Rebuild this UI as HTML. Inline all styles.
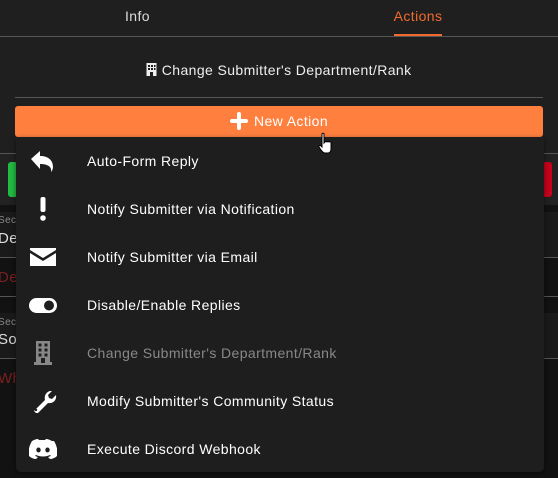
<!DOCTYPE html>
<html><head><meta charset="utf-8"><style>
*{margin:0;padding:0;box-sizing:border-box}
body{width:558px;height:478px;overflow:hidden;background:#121212;font-family:"Liberation Sans",sans-serif;position:relative;color:#fff;letter-spacing:0.4px}
.abs{position:absolute}
.menu{position:absolute;left:16px;top:137px;width:528px;height:335px;background:#1e1e1e;border-radius:0 0 5px 5px;box-shadow:0 2px 6px rgba(0,0,0,.5)}
.it{position:absolute;left:0;height:48px;width:100%;font-size:14px;line-height:48px}
.it span{position:absolute;left:71px}
.it svg{position:absolute;left:13px;top:12px}
</style></head><body>
<div class="abs" style="left:0;top:0;width:558px;height:153px;background:#1f1f1f"></div>
<div class="abs" style="left:0;top:36px;width:558px;height:1px;background:#555"></div>
<div class="abs" style="left:0;top:8px;width:275px;text-align:center;font-size:14px;color:#ddd">Info</div>
<div class="abs" style="left:369px;top:8px;width:98px;text-align:center;font-size:14px;color:#f26a2e">Actions</div>
<div class="abs" style="left:394px;top:34px;width:48px;height:2px;background:#f26a2e"></div>
<div class="abs" style="left:0;top:62px;width:558px;text-align:center;font-size:14px;color:#eee">
<svg width="11" height="13" viewBox="0 0 11 13" style="vertical-align:-1px"><rect x="0.5" y="0" width="10" height="13" fill="#eee"/><g fill="#1f1f1f"><rect x="2" y="2" width="2" height="2"/><rect x="5" y="2" width="2" height="2"/><rect x="8" y="2" width="1.5" height="2"/><rect x="2" y="5" width="2" height="2"/><rect x="5" y="5" width="2" height="2"/><rect x="8" y="5" width="1.5" height="2"/><rect x="4" y="9" width="3" height="4"/></g></svg> Change Submitter's Department/Rank</div>
<div class="abs" style="left:15px;top:97px;width:528px;height:1px;background:#555"></div>
<div class="abs" style="left:15px;top:106px;width:528px;height:31px;background:#ff7f3f;border-radius:3px;text-align:center;font-size:14px;line-height:31px;color:#fff">
<svg width="18" height="18" viewBox="0 0 18 18" style="vertical-align:-4px;margin-right:6px"><path d="M9 2v14M2 9h14" stroke="#fff" stroke-width="4" stroke-linecap="round"/></svg>New Action</div>
<div class="abs" style="left:0;top:153px;width:558px;height:1px;background:#555"></div>
<div class="abs" style="left:0;top:154px;width:558px;height:51px;background:#222"></div>
<div class="abs" style="left:8px;top:162px;width:10px;height:35px;background:#22bb44;border-radius:3px"></div>
<div class="abs" style="left:542px;top:162px;width:10px;height:35px;background:#c8001c;border-radius:3px"></div>
<div class="abs" style="left:0;top:212px;width:558px;height:45px;background:#1a1a1a"></div>
<div class="abs" style="left:-2px;top:215px;font-size:10px;color:#888">Sect</div>
<div class="abs" style="left:-2px;top:230px;font-size:15px;color:#ddd">Dep</div>
<div class="abs" style="left:0;top:257px;width:558px;height:1px;background:#555"></div>
<div class="abs" style="left:-2px;top:269px;font-size:15px;color:#7a2020">Dep</div>
<div class="abs" style="left:0;top:296px;width:558px;height:1px;background:#555"></div>
<div class="abs" style="left:0;top:313px;width:558px;height:45px;background:#1a1a1a"></div>
<div class="abs" style="left:-2px;top:317px;font-size:10px;color:#888">Sect</div>
<div class="abs" style="left:-2px;top:331px;font-size:15px;color:#ddd">Sor</div>
<div class="abs" style="left:0;top:358px;width:558px;height:1px;background:#555"></div>
<div class="abs" style="left:-2px;top:370px;font-size:15px;color:#7a2020">Wh</div>
<div class="menu">
<div class="it" style="top:0"><svg width="28" height="24" viewBox="0 0 28 24"><path d="M2 10L11 2v5c8 0 13 4 13 11c0 2-1 4-2 5c1-5-3-8-11-8v5z" fill="#fff"/></svg><span>Auto-Form Reply</span></div>
<div class="it" style="top:48px"><svg width="28" height="24" viewBox="0 0 28 24"><rect x="11.5" y="0" width="5" height="15" rx="2" fill="#fff"/><circle cx="14" cy="21" r="2.8" fill="#fff"/></svg><span>Notify Submitter via Notification</span></div>
<div class="it" style="top:96px"><svg width="28" height="24" viewBox="0 0 28 24"><path d="M1 3h26v2l-13 8L1 5z" fill="#fff"/><path d="M1 8l13 8l13-8v13H1z" fill="#fff"/></svg><span>Notify Submitter via Email</span></div>
<div class="it" style="top:144px"><svg width="28" height="24" viewBox="0 0 28 24"><rect x="0" y="5" width="28" height="15" rx="7.5" fill="#fff"/><circle cx="20" cy="12.5" r="5" fill="#1e1e1e"/></svg><span>Disable/Enable Replies</span></div>
<div class="it" style="top:192px;color:#888"><svg width="28" height="24" viewBox="0 0 28 24"><rect x="7" y="0" width="14" height="22" fill="#888"/><rect x="5" y="21" width="18" height="3" fill="#888"/><g fill="#1e1e1e"><rect x="9.5" y="2.5" width="3" height="3"/><rect x="15.5" y="2.5" width="3" height="3"/><rect x="9.5" y="7.5" width="3" height="3"/><rect x="15.5" y="7.5" width="3" height="3"/><rect x="9.5" y="12.5" width="3" height="3"/><rect x="15.5" y="12.5" width="3" height="3"/><rect x="12" y="17" width="4" height="5"/></g></svg><span>Change Submitter's Department/Rank</span></div>
<div class="it" style="top:240px"><svg width="28" height="24" viewBox="0 0 28 24"><path d="M5 22l11-11c-1-4 1-8 5-9l2 0l-4 4l1 3l3 1l4-4c1 5-3 9-8 8L8 25z" fill="#fff"/><circle cx="7" cy="21" r="1.2" fill="#1e1e1e"/></svg><span>Modify Submitter's Community Status</span></div>
<div class="it" style="top:288px"><svg width="28" height="24" viewBox="0 0 28 24"><path d="M23 4c-2-1-4-2-6-2l-1 1c-2 0-4 0-6 0l-1-1c-2 0-4 1-6 2C0 9-1 14 0 19c2 2 5 3 7 3l2-2c-1 0-2-1-3-1l1-1c4 2 10 2 14 0l1 1c-1 0-2 1-3 1l2 2c2 0 5-1 7-3c1-5 0-10-3-15z" fill="#fff"/><ellipse cx="9.5" cy="13" rx="2.2" ry="2.5" fill="#1e1e1e"/><ellipse cx="18.5" cy="13" rx="2.2" ry="2.5" fill="#1e1e1e"/></svg><span>Execute Discord Webhook</span></div>
</div>
<svg class="abs" style="left:318px;top:132px" width="18" height="24" viewBox="0 0 18 24"><path d="M4 2c0-1 2-1 2 0v9l1-1c1-1 2 0 2 0c1-1 2 0 2 0c1-1 2 0 2 1v6c0 2-1 4-3 4H7c-2 0-3-2-4-3l-2-3c-1-1 1-2 2-1l1 1z" fill="#fff" stroke="#000" stroke-width="1"/></svg>
</body></html>
